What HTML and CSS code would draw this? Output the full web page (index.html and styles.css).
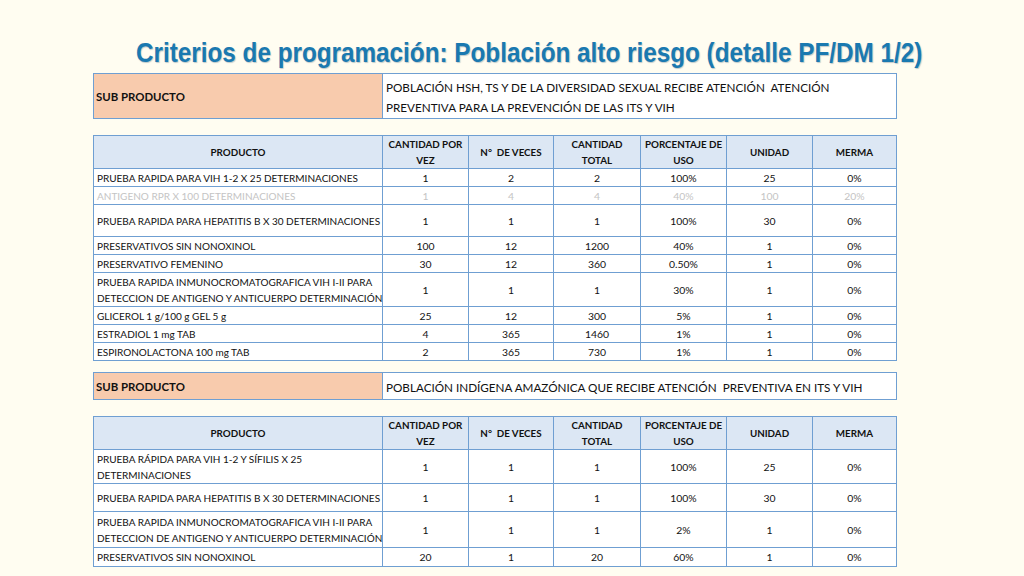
FILE: index.html
```html
<!DOCTYPE html>
<html lang="es">
<head>
<meta charset="utf-8">
<title>Criterios de programación</title>
<link rel="stylesheet" href="styles.css">
</head>
<body>
<div class="slide">
  <h1 class="title">Criterios de programación: Población alto riesgo (detalle PF/DM 1/2)</h1>

  <table class="sub sub-1">
    <colgroup><col class="c-prod"><col></colgroup>
    <tr>
      <th class="sub-label">SUB PRODUCTO</th>
      <td class="sub-text">POBLACIÓN HSH, TS Y DE LA DIVERSIDAD SEXUAL RECIBE ATENCIÓN&nbsp; ATENCIÓN<br>PREVENTIVA PARA LA PREVENCIÓN DE LAS ITS Y VIH</td>
    </tr>
  </table>

  <table class="grid grid-1">
    <colgroup>
      <col class="c-prod"><col class="c-1"><col class="c-2"><col class="c-3"><col class="c-4"><col class="c-5"><col>
    </colgroup>
    <thead>
      <tr class="h">
        <th>PRODUCTO</th><th>CANTIDAD POR<br>VEZ</th><th>N°&nbsp; DE VECES</th><th>CANTIDAD<br>TOTAL</th><th>PORCENTAJE DE<br>USO</th><th>UNIDAD</th><th>MERMA</th>
      </tr>
    </thead>
    <tbody>
      <tr class="r18"><td>PRUEBA RAPIDA PARA VIH 1-2 X 25 DETERMINACIONES</td><td>1</td><td>2</td><td>2</td><td>100%</td><td>25</td><td>0%</td></tr>
      <tr class="r18 dim"><td>ANTIGENO RPR X 100 DETERMINACIONES</td><td>1</td><td>4</td><td>4</td><td>40%</td><td>100</td><td>20%</td></tr>
      <tr class="r32"><td>PRUEBA RAPIDA PARA HEPATITIS B X 30 DETERMINACIONES</td><td>1</td><td>1</td><td>1</td><td>100%</td><td>30</td><td>0%</td></tr>
      <tr class="r18"><td>PRESERVATIVOS SIN NONOXINOL</td><td>100</td><td>12</td><td>1200</td><td>40%</td><td>1</td><td>0%</td></tr>
      <tr class="r18"><td>PRESERVATIVO FEMENINO</td><td>30</td><td>12</td><td>360</td><td>0.50%</td><td>1</td><td>0%</td></tr>
      <tr class="r34"><td>PRUEBA RAPIDA INMUNOCROMATOGRAFICA VIH I-II PARA<br>DETECCION DE ANTIGENO Y ANTICUERPO DETERMINACIÓN</td><td>1</td><td>1</td><td>1</td><td>30%</td><td>1</td><td>0%</td></tr>
      <tr class="r18"><td>GLICEROL 1 g/100 g GEL 5 g</td><td>25</td><td>12</td><td>300</td><td>5%</td><td>1</td><td>0%</td></tr>
      <tr class="r18"><td>ESTRADIOL 1 mg TAB</td><td>4</td><td>365</td><td>1460</td><td>1%</td><td>1</td><td>0%</td></tr>
      <tr class="r18"><td>ESPIRONOLACTONA 100 mg TAB</td><td>2</td><td>365</td><td>730</td><td>1%</td><td>1</td><td>0%</td></tr>
    </tbody>
  </table>

  <table class="sub sub-2">
    <colgroup><col class="c-prod"><col></colgroup>
    <tr>
      <th class="sub-label">SUB PRODUCTO</th>
      <td class="sub-text">POBLACIÓN INDÍGENA AMAZÓNICA QUE RECIBE ATENCIÓN&nbsp; PREVENTIVA EN ITS Y VIH</td>
    </tr>
  </table>

  <table class="grid grid-2">
    <colgroup>
      <col class="c-prod"><col class="c-1"><col class="c-2"><col class="c-3"><col class="c-4"><col class="c-5"><col>
    </colgroup>
    <thead>
      <tr class="h">
        <th>PRODUCTO</th><th>CANTIDAD POR<br>VEZ</th><th>N°&nbsp; DE VECES</th><th>CANTIDAD<br>TOTAL</th><th>PORCENTAJE DE<br>USO</th><th>UNIDAD</th><th>MERMA</th>
      </tr>
    </thead>
    <tbody>
      <tr class="r34"><td>PRUEBA RÁPIDA PARA VIH 1-2 Y SÍFILIS X 25<br>DETERMINACIONES</td><td>1</td><td>1</td><td>1</td><td>100%</td><td>25</td><td>0%</td></tr>
      <tr class="r28"><td>PRUEBA RAPIDA PARA HEPATITIS B X 30 DETERMINACIONES</td><td>1</td><td>1</td><td>1</td><td>100%</td><td>30</td><td>0%</td></tr>
      <tr class="r36"><td>PRUEBA RAPIDA INMUNOCROMATOGRAFICA VIH I-II PARA<br>DETECCION DE ANTIGENO Y ANTICUERPO DETERMINACIÓN</td><td>1</td><td>1</td><td>1</td><td>2%</td><td>1</td><td>0%</td></tr>
      <tr class="r19"><td>PRESERVATIVOS SIN NONOXINOL</td><td>20</td><td>1</td><td>20</td><td>60%</td><td>1</td><td>0%</td></tr>
    </tbody>
  </table>
</div>
</body>
</html>
```

FILE: styles.css
```css
html, body {
  margin: 0;
  padding: 0;
}
body {
  background: #fffdf1;
  font-family: Lato, "Open Sans", "Liberation Sans", sans-serif;
  color: #111;
  width: 1024px;
  height: 576px;
  overflow: hidden;
}
.slide {
  padding: 0 0 0 93px;
  display: flex;
  flex-direction: column;
  align-items: flex-start;
}
.title {
  margin: 38px 0 0 43px;
  height: 35px;
  font-family: "Liberation Sans", Arial, sans-serif;
  font-weight: bold;
  font-size: 28px;
  line-height: 30px;
  color: #1a79b0;
  transform: scaleX(0.867);
  transform-origin: left top;
  text-shadow: 1px 1px 1px rgba(0, 50, 90, 0.25);
  white-space: nowrap;
}
table {
  border-collapse: collapse;
  table-layout: fixed;
  width: 804px;
}
.c-prod { width: 289px; }
.c-1 { width: 86px; }
.c-2 { width: 85px; }
.c-3 { width: 87px; }
.c-4 { width: 86px; }
.c-5 { width: 86px; }

td, th {
  border: 1.5px solid #6f9fd2;
  padding: 0 3px;
  font-size: 10px;
  line-height: 16px;
  white-space: nowrap;
}

/* sub producto boxes */
.sub { background: #fff; }
.sub-1 tr { height: 45px; }
.sub-2 { margin-top: 11px; }
.sub-2 tr { height: 27px; }
.sub-label {
  background: #f8cbad;
  text-align: left;
  font-weight: bold;
  font-size: 11.4px;
  padding-left: 2px;
  padding-top: 2px;
}
.sub-text {
  font-size: 11.7px;
  line-height: 20px;
  padding-left: 3px;
  padding-top: 1px;
}

/* data grids */
.grid { background: #fff; }
.grid-1 { margin-top: 16px; }
.grid-2 { margin-top: 16px; }
.grid th {
  background: #dce7f4;
  font-weight: bold;
  font-size: 9.8px;
  line-height: 16px;
  text-align: center;
  padding: 0;
}
.grid .h { height: 33px; }
.grid td { text-align: center; }
.grid td + td { font-size: 10.4px; }
.grid td:first-child {
  text-align: left;
  padding-left: 3px;
}
.r18 { height: 18px; }
.r19 { height: 19px; }
.r28 { height: 28px; }
.r32 { height: 32px; }
.r34 { height: 34px; }
.r36 { height: 36px; }
.dim td { color: #c4c4c4; }
```
